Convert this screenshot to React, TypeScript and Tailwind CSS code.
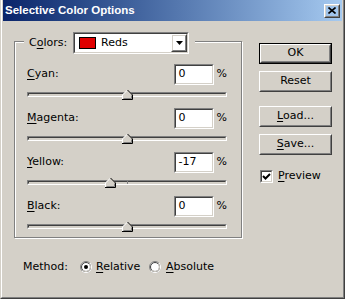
import React from 'react'

type Kids = { className?: string; children?: React.ReactNode }

// win2000 bevel: outer light/dark pair, inner light/dark pair
function Raised({ className = '', children }: Kids) {
  return (
    <div className={`border border-t-white border-l-white border-r-[#404040] border-b-[#404040] ${className}`}>
      <div className="w-full h-full border border-t-[#d4d0c8] border-l-[#d4d0c8] border-r-[#808080] border-b-[#808080] flex items-center justify-center">
        {children}
      </div>
    </div>
  )
}

function Sunken({ className = '', children }: Kids) {
  return (
    <div className={`border border-t-[#808080] border-l-[#808080] border-r-white border-b-white ${className}`}>
      <div className="w-full h-full border border-t-[#404040] border-l-[#404040] border-r-[#d4d0c8] border-b-[#d4d0c8] bg-white flex items-center">
        {children}
      </div>
    </div>
  )
}

function Key({ children }: Kids) {
  return <span className="underline underline-offset-[2px]">{children}</span>
}

function Btn({ children, def }: Kids & { def?: boolean }) {
  if (def) {
    return (
      <div className="w-[73px] h-[21px] border border-black">
        <Raised className="w-full h-full">{children}</Raised>
      </div>
    )
  }
  return <Raised className="w-[73px] h-[21px]">{children}</Raised>
}

function Thumb() {
  return (
    <svg width="11" height="10" viewBox="0 0 11 10" className="block">
      <polygon points="0,10 0,5 5,0 6,0 11,5 11,10" fill="#d4d0c8" />
      <polyline points="0.5,9.5 0.5,5 5.5,0" fill="none" stroke="#ffffff" />
      <polyline points="5.5,0 10.5,5 10.5,9.5 0,9.5" fill="none" stroke="#000000" />
      <polyline points="1.5,8.5 9.5,8.5 9.5,5.5" fill="none" stroke="#808080" />
    </svg>
  )
}

function Slider({ value, tick }: { value: number; tick?: boolean }) {
  return (
    <div className="relative w-[200px] h-[5px] mt-[7px]">
      <div className="w-full h-full border border-t-[#808080] border-l-[#808080] border-r-white border-b-white">
        <div className="w-full h-full border border-t-[#404040] border-l-[#404040] border-r-[#d4d0c8] border-b-[#d4d0c8] bg-[#d4d0c8]" />
      </div>
      {tick && <div className="absolute left-[100px] top-[1px] w-[1px] h-[3px] bg-[#808080]" />}
      <div className="absolute top-[-2px]" style={{ left: 100 + value - 5 }}>
        <Thumb />
      </div>
    </div>
  )
}

function Row({ label, value, slider, tick }: { label: React.ReactNode; value: string; slider: number; tick?: boolean }) {
  return (
    <div>
      <div className="flex items-center h-[21px] w-[200px]">
        <div className="flex-1">{label}</div>
        <Sunken className="w-[40px] h-[21px]">
          <span className="pl-[3px]">{value}</span>
        </Sunken>
        <span className="pl-[3px]">%</span>
      </div>
      <Slider value={slider} tick={tick} />
    </div>
  )
}

function Radio({ on }: { on?: boolean }) {
  return (
    <svg width="12" height="12" viewBox="0 0 12 12" className="block">
      <circle cx="6" cy="6" r="5.5" fill="#ffffff" stroke="#808080" />
      <path d="M10 2 A5.5 5.5 0 0 1 2 10" fill="none" stroke="#ffffff" />
      <circle cx="6" cy="6" r="4.5" fill="none" stroke="#404040" />
      <path d="M9.2 2.8 A4.5 4.5 0 0 1 2.8 9.2" fill="none" stroke="#d4d0c8" />
      {on && <circle cx="6" cy="6" r="2" fill="#000000" />}
    </svg>
  )
}

export default function App() {
  return (
    <div className="w-[345px] h-[299px] overflow-hidden bg-[#d4d0c8] border-l border-r border-b border-l-[#d4d0c8] border-r-[#404040] border-b-[#404040] font-['DejaVu_Sans',sans-serif] text-[11px] text-black">
      <div className="w-full h-full border-l border-r border-b border-l-white border-r-[#808080] border-b-[#808080] px-[1px]">
        {/* title bar */}
        <div className="h-[21px] flex items-center bg-linear-to-r from-[#0a246a] to-[#a6caf0]">
          <span className="pl-[2px] text-white font-bold text-[11.5px] font-['Liberation_Sans',sans-serif]">
            Selective Color Options
          </span>
          <Raised className="ml-auto mr-[2px] w-[16px] h-[14px]">
            <svg width="8" height="7" viewBox="0 0 8 7">
              <path d="M0.5 0.5 L7.5 6.5 M7.5 0.5 L0.5 6.5" stroke="#000" strokeWidth="1.6" />
            </svg>
          </Raised>
        </div>

        <div className="flex pl-[11px]">
          {/* left: group box */}
          <div className="w-[228px] pt-[20px]">
            <div className="h-[197px] border border-[#808080] shadow-[inset_1px_1px_0_#fff,1px_1px_0_#fff]">
              <div className="-mt-[10px] ml-[9px] w-fit h-[22px] flex items-center bg-[#d4d0c8] pl-[5px] pr-[6px]">
                <span className="w-[44px]">
                  C<Key>o</Key>lors:
                </span>
                <Sunken className="w-[116px] h-[22px]">
                  <div className="ml-[4px] w-[17px] h-[12px] border border-black bg-[#e00000]" />
                  <span className="ml-[5px]">Reds</span>
                  <Raised className="ml-auto w-[16px] h-full">
                    <svg width="7" height="4" viewBox="0 0 7 4">
                      <polygon points="0,0 7,0 3.5,4" fill="#000" />
                    </svg>
                  </Raised>
                </Sunken>
              </div>

              <div className="pl-[12px] mt-[10px] flex flex-col gap-[11px]">
                <Row label={<><Key>C</Key>yan:</>} value="0" slider={0} />
                <Row label={<><Key>M</Key>agenta:</>} value="0" slider={0} />
                <Row label={<><Key>Y</Key>ellow:</>} value="-17" slider={-17} tick />
                <Row label={<><Key>B</Key>lack:</>} value="0" slider={0} />
              </div>
            </div>
          </div>

          {/* right: buttons */}
          <div className="ml-[17px] pt-[22px] flex flex-col">
            <Btn def>OK</Btn>
            <div className="mt-[7px]">
              <Btn>Reset</Btn>
            </div>
            <div className="mt-[14px]">
              <Btn>
                <Key>L</Key>oad...
              </Btn>
            </div>
            <div className="mt-[7px]">
              <Btn>
                <Key>S</Key>ave...
              </Btn>
            </div>
            <div className="mt-[13px] ml-[1px] flex items-center">
              <Sunken className="w-[13px] h-[13px]">
                <svg width="9" height="9" viewBox="0 0 9 9">
                  <path d="M1 4 L3.5 6.5 L8 2" fill="none" stroke="#000" strokeWidth="2" />
                </svg>
              </Sunken>
              <span className="ml-[5px]">
                <Key>P</Key>review
              </span>
            </div>
          </div>
        </div>

        {/* method */}
        <div className="mt-[21px] pl-[20px] h-[16px] flex items-center">
          <span className="w-[57px]">Method:</span>
          <div className="w-[69px] flex items-center">
            <Radio on />
            <span className="ml-[4px]">
              <Key>R</Key>elative
            </span>
          </div>
          <div className="flex items-center">
            <Radio />
            <span className="ml-[5px]">
              <Key>A</Key>bsolute
            </span>
          </div>
        </div>
      </div>
    </div>
  )
}
